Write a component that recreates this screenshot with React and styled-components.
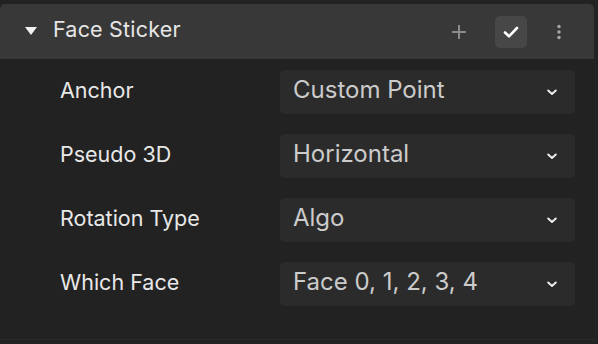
import React from 'react';
import styled, { createGlobalStyle } from 'styled-components';

const GlobalStyle = createGlobalStyle`
  html, body {
    margin: 0;
    padding: 0;
    background: #222222;
  }
  body {
    font-family: Inter, "Noto Sans", sans-serif;
    -webkit-font-smoothing: antialiased;
  }
`;

const Panel = styled.div`
  width: 596px;
  height: 340px;
  padding-top: 4px;
  box-sizing: border-box;
  border-bottom: 1px solid #2b2b2b;
  border-right: 1px solid #262626;
`;

const Header = styled.div`
  display: flex;
  align-items: center;
  height: 55px;
  margin-right: 1px;
  background: #383838;
  border-radius: 5px 5px 0 0;
  padding-left: 25px;
  padding-right: 27px;
`;

const Caret = styled.span`
  width: 0;
  height: 0;
  border-left: 6.5px solid transparent;
  border-right: 6.5px solid transparent;
  border-top: 8px solid #f2f2f2;
  margin-right: 16px;
  margin-top: -1px;
`;

const Title = styled.span`
  flex: 1;
  font-size: 21.5px;
  color: #e6e6e6;
  letter-spacing: 0.2px;
  padding-bottom: 5px;
`;

const Actions = styled.div`
  display: flex;
  align-items: center;
  gap: 20px;
`;

const IconButton = styled.button`
  width: 32px;
  height: 32px;
  display: flex;
  align-items: center;
  justify-content: center;
  border: none;
  padding: 0;
  border-radius: 5px;
  background: ${(p) => (p.$active ? '#474747' : 'transparent')};
  color: ${(p) => (p.$active ? '#ffffff' : '#8c8c8c')};
`;

const MenuButton = styled(IconButton)`
  width: 16px;
  margin-left: 4px;
  color: #a8a8a8;
`;

const Rows = styled.div`
  display: flex;
  flex-direction: column;
  gap: 20px;
  padding: 11px 20px 0 60px;
`;

const Row = styled.div`
  display: flex;
  align-items: center;
  height: 44px;
`;

const Label = styled.span`
  width: 220px;
  font-size: 21.5px;
  color: #e8e8e8;
  padding-bottom: 5px;
`;

const Select = styled.div`
  flex: 1;
  height: 44px;
  display: flex;
  align-items: center;
  justify-content: space-between;
  background: #2b2b2b;
  border-radius: 5px;
  padding: 0 18px 0 13px;
  box-sizing: border-box;
  color: #cbcbcb;
`;

const Value = styled.span`
  font-size: 24px;
  padding-bottom: 5px;
`;

const Chevron = () => (
  <svg width="10" height="7" viewBox="0 0 10 7">
    <polyline points="1.2,1.5 5,5 8.8,1.5" fill="none" stroke="#f0f0f0" strokeWidth="1.9" strokeLinecap="round" strokeLinejoin="round" />
  </svg>
);

const fields = [
  { label: 'Anchor', value: 'Custom Point' },
  { label: 'Pseudo 3D', value: 'Horizontal' },
  { label: 'Rotation Type', value: 'Algo' },
  { label: 'Which Face', value: 'Face 0, 1, 2, 3, 4' },
];

export default function App() {
  return (
    <>
      <GlobalStyle />
      <Panel>
        <Header>
          <Caret />
          <Title>Face Sticker</Title>
          <Actions>
            <IconButton>
              <svg width="16" height="16" viewBox="0 0 16 16">
                <path d="M8 1v14M1 8h14" stroke="currentColor" strokeWidth="2" />
              </svg>
            </IconButton>
            <IconButton $active>
              <svg width="16" height="14" viewBox="0 0 16 14">
                <polyline points="2,7.5 6,11.3 14,3" fill="none" stroke="currentColor" strokeWidth="2.6" strokeLinecap="round" strokeLinejoin="round" />
              </svg>
            </IconButton>
            <MenuButton>
              <svg width="4" height="16" viewBox="0 0 4 16">
                <circle cx="2" cy="2.5" r="1.7" fill="currentColor" />
                <circle cx="2" cy="8" r="1.7" fill="currentColor" />
                <circle cx="2" cy="13.5" r="1.7" fill="currentColor" />
              </svg>
            </MenuButton>
          </Actions>
        </Header>
        <Rows>
          {fields.map((f) => (
            <Row key={f.label}>
              <Label>{f.label}</Label>
              <Select>
                <Value>{f.value}</Value>
                <Chevron />
              </Select>
            </Row>
          ))}
        </Rows>
      </Panel>
    </>
  );
}
